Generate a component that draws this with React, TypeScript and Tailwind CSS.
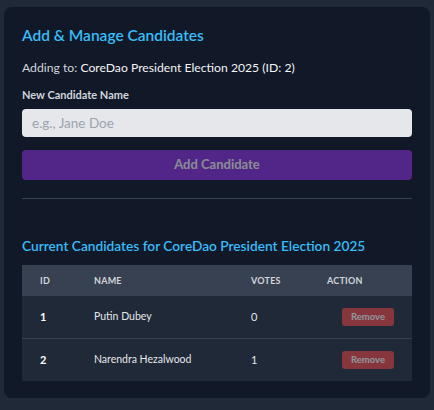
import React from "react";

const rows = [
  { id: 1, name: "Putin Dubey", votes: 0 },
  { id: 2, name: "Narendra Hezalwood", votes: 1 },
];

export default function App() {
  return (
    <div className="min-h-[410px] bg-[#1f2937] px-[4px] pt-[7px] pb-[12px]" style={{ fontFamily: "Lato, 'Open Sans', sans-serif" }}>
      <div className="rounded-[8px] bg-[#111827] px-[18px] pt-[17px] pb-[17px]">
        <h2 className="text-[15.5px] font-semibold leading-[22px] text-[#38bdf8]">Add &amp; Manage Candidates</h2>
        <p className="mt-[13px] text-[12.2px] leading-[18px] text-[#d1d5db]">
          Adding to: <span className="text-[#f3f4f6]">CoreDao President Election 2025 (ID: 2)</span>
        </p>
        <label className="mt-[10px] block text-[11px] font-bold leading-[16px] text-[#d1d5db]">New Candidate Name</label>
        <input
          className="mt-[6px] block h-[28px] w-full rounded-[4px] bg-[#e5e7eb] px-[10px] text-[13.5px] text-gray-900 placeholder:text-[#9ca3af] outline-none"
          placeholder="e.g., Jane Doe"
        />
        <button
          disabled
          className="mt-[13px] block h-[30px] w-full rounded-[4px] bg-[#9333ea] text-[13px] font-bold text-white opacity-50"
        >
          Add Candidate
        </button>
        <div className="mt-[18px] border-t border-[#374151]" />
        <h3 className="mt-[37px] text-[13.7px] font-semibold leading-[20px] text-[#38bdf8]">
          Current Candidates for CoreDao President Election 2025
        </h3>
        <table className="mt-[9px] w-full table-fixed border-collapse">
          <colgroup>
            <col className="w-[54px]" />
            <col className="w-[157px]" />
            <col className="w-[76px]" />
            <col />
          </colgroup>
          <thead>
            <tr className="h-[31px] bg-[#374151] text-left text-[9px] font-bold uppercase tracking-wide text-[#d1d5db]">
              <th className="pl-[18px] font-bold">ID</th>
              <th className="pl-[18px] font-bold">Name</th>
              <th className="pl-[18px] font-bold">Votes</th>
              <th className="pl-[18px] font-bold">Action</th>
            </tr>
          </thead>
          <tbody>
            {rows.map((r, i) => (
              <tr key={r.id} className={"bg-[#1f2937] text-[10.5px] " + (i > 0 ? "h-[43px] border-t border-[#374151]" : "h-[42px]")}>
                <td className="pl-[18px] text-[11px] font-bold text-white">{r.id}</td>
                <td className="pl-[18px] text-[#e5e7eb]">{r.name}</td>
                <td className="pl-[18px] text-[11px] text-[#e5e7eb]">{r.votes}</td>
                <td className="pr-[18px] text-right">
                  <button disabled className="h-[18px] w-[52px] rounded-[3px] bg-[#ef4444] text-[9.5px] font-bold text-white opacity-50 align-middle">
                    Remove
                  </button>
                </td>
              </tr>
            ))}
          </tbody>
        </table>
      </div>
    </div>
  );
}
